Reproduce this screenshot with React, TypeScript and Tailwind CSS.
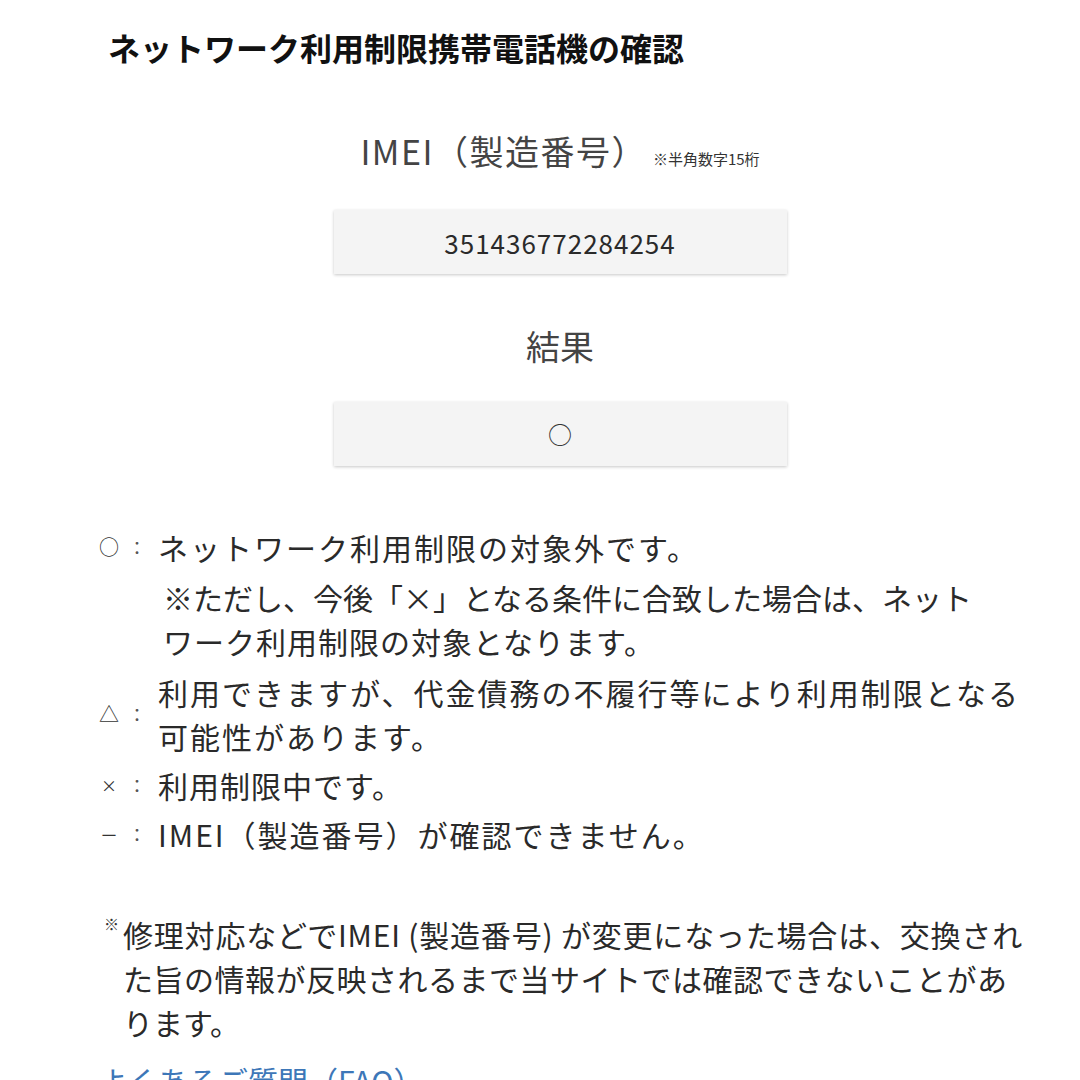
import React from 'react';

const Mark: React.FC<{ sign: string; size?: string }> = ({ sign, size = 'text-[20px]' }) => (
    <div className="flex w-[60px] shrink-0 items-center">
        <span className={`w-[22px] text-center ${size} text-[#333]`}>{sign}</span>
        <span className="ml-[8px] text-[18px] text-[#555]">：</span>
    </div>
);

const App: React.FC = () => {
    return (
        <div
            className="h-[1080px] w-[1080px] overflow-hidden bg-white text-[#2a2a2a]"
            style={{ fontFamily: '"Noto Sans CJK JP", "Noto Sans", sans-serif' }}
        >
            <div className="ml-[98px] w-[924px] pt-[27px]">
                <h1 className="ml-[10px] text-[32px] font-bold leading-[40px] text-[#111]">
                    ネットワーク利用制限携帯電話機の確認
                </h1>

                {/* IMEI入力 */}
                <div className="mt-[62px] flex items-end justify-center">
                    <span className="text-[34px] leading-[44px] tracking-[1.5px] text-[#444]">IMEI（製造番号）</span>
                    <span className="mb-[4px] ml-[6px] text-[15px] leading-[20px] text-[#333]">※半角数字15桁</span>
                </div>
                <div className="mx-auto mt-[37px] flex h-[64px] w-[453px] items-center justify-center bg-[#f4f4f4] shadow-[0_1px_3px_rgba(0,0,0,0.22)]">
                    <span className="text-[26px] tracking-[1px] text-[#2a2a2a]">351436772284254</span>
                </div>

                {/* 結果 */}
                <div className="mt-[50px] text-center text-[34px] leading-[44px] text-[#444]">結果</div>
                <div className="mx-auto mt-[34px] flex h-[64px] w-[453px] items-center justify-center bg-[#f4f4f4] shadow-[0_1px_3px_rgba(0,0,0,0.22)]">
                    <span className="text-[24px] text-[#333]">○</span>
                </div>

                {/* 凡例 */}
                <div className="mt-[59px] flex flex-col gap-[5px] whitespace-nowrap text-[30px] leading-[44px]">
                    <div>
                        <div className="flex items-center">
                            <Mark sign="○" />
                            <span className="tracking-[2px]">ネットワーク利用制限の対象外です。</span>
                        </div>
                        <div className="ml-[65px] mt-[6px]">
                            <div>※ただし、今後「×」となる条件に合致した場合は、ネット</div>
                            <div className="tracking-[1px]">ワーク利用制限の対象となります。</div>
                        </div>
                    </div>
                    <div className="mt-[2px] flex items-center">
                        <Mark sign="△" />
                        <div className="tracking-[2px]">
                            <div>利用できますが、代金債務の不履行等により利用制限となる</div>
                            <div>可能性があります。</div>
                        </div>
                    </div>
                    <div className="flex items-center">
                        <Mark sign="×" size="text-[16px]" />
                        <span className="tracking-[1px]">利用制限中です。</span>
                    </div>
                    <div className="flex items-center">
                        <Mark sign="－" size="text-[18px]" />
                        <span className="tracking-[2px]">IMEI（製造番号）が確認できません。</span>
                    </div>
                </div>

                {/* 注意書き */}
                <div className="mt-[56px] flex whitespace-nowrap text-[30px] leading-[44px]">
                    <span className="ml-[6px] w-[19px] shrink-0 text-[15px] leading-[24px] text-[#333]">※</span>
                    <div>
                        <div className="tracking-[0.8px]">修理対応などでIMEI (製造番号) が変更になった場合は、交換され</div>
                        <div className="tracking-[0.5px]">た旨の情報が反映されるまで当サイトでは確認できないことがあ</div>
                        <div>ります。</div>
                    </div>
                </div>

                <div className="mt-[14px] text-[30px] leading-[44px] text-[#3d77b8]">よくあるご質問（FAQ）</div>
            </div>
        </div>
    );
};

export default App;
